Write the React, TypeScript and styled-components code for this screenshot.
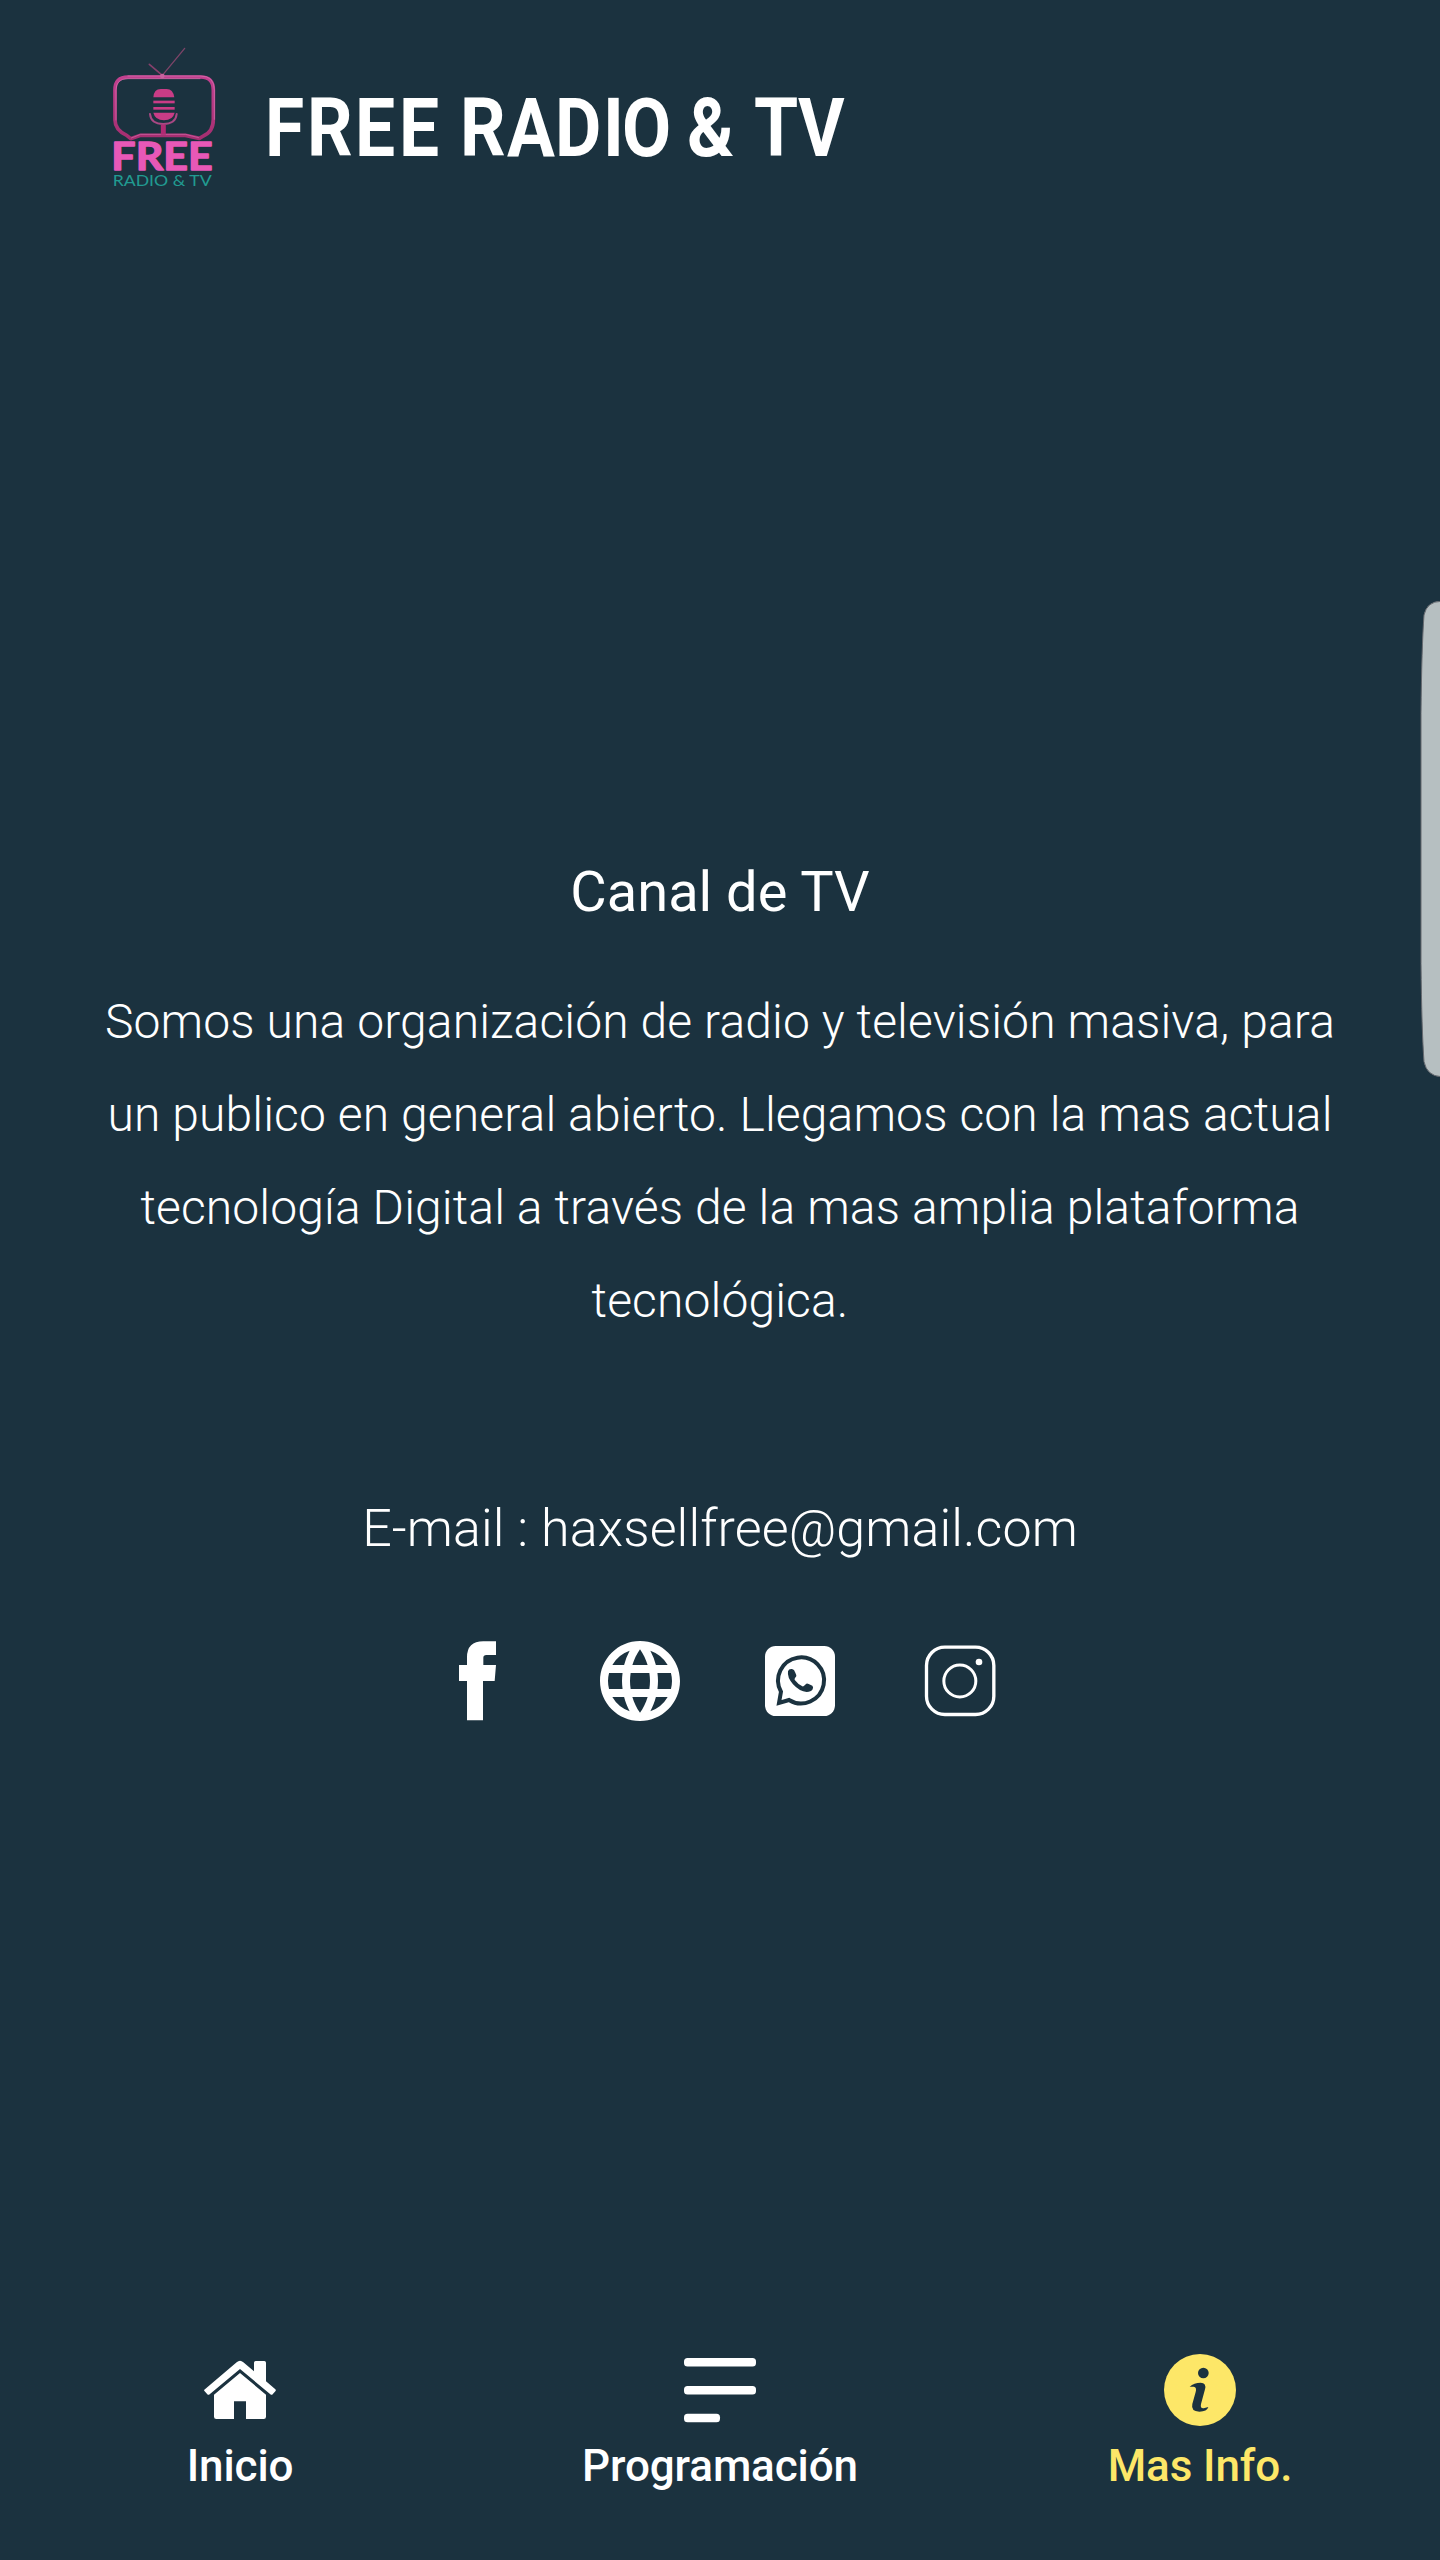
import React from 'react';
import styled, { createGlobalStyle } from 'styled-components';
import { MdLanguage } from 'react-icons/md';

const BG = '#1b323f';
const ACCENT = '#fde768';

const GlobalStyle = createGlobalStyle`
  *, *::before, *::after { box-sizing: border-box; }
  body { margin: 0; background: ${BG}; }
`;

const Screen = styled.div`
  position: relative;
  display: flex;
  flex-direction: column;
  width: 1440px;
  height: 2560px;
  overflow: hidden;
  background: ${BG};
  color: #fff;
  font-family: Roboto, "Liberation Sans", sans-serif;
`;

const Header = styled.header`
  display: flex;
  align-items: center;
  gap: 30px;
  height: 230px;
  padding: 0 100px;
`;

const Logo = styled.svg`
  display: block;
  width: 130px;
  height: 170px;
`;

const Wordmark = styled.svg`
  display: block;
  width: 600px;
  height: 120px;
`;

const Main = styled.main`
  flex: 1;
  display: flex;
  flex-direction: column;
  align-items: center;
  padding: 629px 80px 0;
  text-align: center;
`;

const Heading = styled.h1`
  margin: 0 0 50px;
  font-size: 56px;
  font-weight: 400;
  line-height: 66px;
`;

const About = styled.p`
  width: 1260px;
  margin: 0;
  font-size: 48px;
  font-weight: 300;
  line-height: 93px;
  letter-spacing: 0.12px;
`;

const Contact = styled.p`
  margin: 151px 0 0;
  font-size: 52px;
  font-weight: 300;
  line-height: 62px;
  letter-spacing: 0.1px;
`;

const SocialRow = styled.div`
  display: flex;
  gap: 80px;
  margin-top: 81px;
`;

const SocialLink = styled.a`
  display: block;
  width: 80px;
  height: 80px;
  color: #fff;

  svg {
    display: block;
    width: 100%;
    height: 100%;
  }
`;

const Nav = styled.nav`
  display: grid;
  grid-template-columns: repeat(3, 1fr);
  padding-bottom: 68px;
`;

const NavItem = styled.a<{ $active?: boolean }>`
  display: flex;
  flex-direction: column;
  align-items: center;
  gap: 14px;
  color: ${({ $active }) => ($active ? ACCENT : '#fff')};

  svg {
    display: block;
    width: 72px;
    height: 72px;
  }
`;

const NavLabel = styled.span`
  font-size: 44px;
  font-weight: 500;
  line-height: 52px;
  letter-spacing: -0.1px;
`;

const EdgeHandle = styled.svg`
  position: absolute;
  top: 600px;
  right: 0;
  width: 20px;
  height: 480px;
`;

const LogoMark = () => (
  <Logo viewBox="0 0 390 510">
    <defs>
      <linearGradient id="frame" x1="0" y1="0" x2="0" y2="1">
        <stop offset="0" stopColor="#c2408f" />
        <stop offset="1" stopColor="#a52e70" />
      </linearGradient>
    </defs>
    <g fill="none" strokeLinecap="round" strokeLinejoin="round">
      <path d="M254 55 187 136" stroke="#7d4468" strokeWidth="4" />
      <path d="M148 103 187 136" stroke="#86406c" strokeWidth="5" />
      <path
        d="M84 141H302Q340 141 340 180V268Q340 306 310 318L298 325 256 316H122L92 326 80 316Q45 300 45 270V180Q45 141 84 141Z"
        stroke="url(#frame)"
        strokeWidth="11"
      />
      <path
        d="M84 138H302Q343 138 343 180V268M48 270V180Q48 146 84 146H300"
        stroke="#d977b2"
        strokeWidth="2"
      />
      <path d="M94 324 122 313H256L296 323" stroke="#d66bab" strokeWidth="2" />
      <path d="M150 252Q153 282 190 282T230 252" stroke="#a94884" strokeWidth="6" />
      <path d="M190 284V314" stroke="#b02b73" strokeWidth="15" strokeLinecap="butt" />
    </g>
    <circle cx="187" cy="138" r="7" fill="#c9629f" />
    <g fill="#c93c86">
      <path d="M160 202Q162 177 182 177H200Q219 177 223 202Z" />
      <rect x="160" y="212" width="64" height="8" />
      <rect x="160" y="231" width="64" height="8" />
      <path d="M160 248H224Q219 270 192 271 165 270 160 248Z" />
    </g>
    <text
      x="34"
      y="420"
      textLength="304"
      lengthAdjust="spacingAndGlyphs"
      fill="#e858b7"
      stroke="#e858b7"
      strokeWidth="4"
      strokeLinejoin="round"
      fontFamily="Lato, sans-serif"
      fontWeight="700"
      fontSize="112"
    >
      FREE
    </text>
    <text
      x="38"
      y="468"
      textLength="297"
      lengthAdjust="spacingAndGlyphs"
      fill="#219b91"
      fontFamily="Lato, sans-serif"
      fontWeight="400"
      fontSize="43"
    >
      RADIO &amp; TV
    </text>
  </Logo>
);

const FacebookIcon = () => (
  <svg viewBox="0 63 240 240" fill="currentColor">
    <path d="M81 301V183H57V135H81V112Q81 64 130 64H168V105H139Q130 105 130 113V135H168L164 183H129V301Z" />
  </svg>
);

const WhatsappIcon = () => (
  <svg viewBox="120 63 240 240">
    <rect x="135" y="78" width="210" height="210" rx="32" fill="#fff" />
    <path
      d="M183 215A69 69 0 1 1 207 240L177 249Z"
      fill="none"
      stroke={BG}
      strokeWidth="12"
    />
    <path
      d="M204 154Q206 146 216 147 223 148 226 158L229 166Q230 169 225 174 222 178 225 181 234 193 247 199 251 200 254 196L259 191Q262 190 266 192L277 197Q281 201 278 208 273 216 260 216 239 215 219 193 201 172 204 154Z"
      fill={BG}
    />
  </svg>
);

const InstagramIcon = () => (
  <svg viewBox="600 63 240 240" fill="none" stroke="#fff">
    <rect x="619.5" y="81.5" width="202" height="202" rx="55" strokeWidth="10" />
    <circle cx="719.5" cy="183" r="48" strokeWidth="9" />
    <circle cx="777" cy="126" r="10" fill="#fff" stroke="none" />
  </svg>
);

const HomeIcon = () => (
  <svg viewBox="102 42 216 216" fill="currentColor">
    <path d="M103 149 200 67Q210 58 220 67L252 94V68Q252 63 257 63H283Q288 63 288 68V124L316 148Q319 151 316 154L308 163Q305 166 301 163L210 87 119 163Q115 166 112 163L104 154Q101 151 103 149Z" />
    <path d="M210 99 288 164V230Q288 237 281 237H228V184H192V237H139Q132 237 132 230V164Z" />
  </svg>
);

const ScheduleIcon = () => (
  <svg viewBox="0 0 72 72" fill="currentColor">
    <rect x="0" y="4" width="72" height="8.4" rx="3.5" />
    <rect x="0" y="32" width="72" height="8.4" rx="3.5" />
    <rect x="0" y="59.8" width="36" height="8.4" rx="3.5" />
  </svg>
);

const InfoIcon = () => (
  <svg viewBox="222 72 216 216">
    <circle cx="330" cy="180" r="108" fill="currentColor" />
    <circle cx="340" cy="129" r="16" fill={BG} />
    <path
      d="M299 170Q312 158 332 158 350 159 345 178L333 222Q330 236 341 235L355 231Q351 245 328 245 302 244 307 222L317 186Q321 171 311 170Z"
      fill={BG}
    />
  </svg>
);

const social = [
  { name: 'Facebook', icon: <FacebookIcon /> },
  { name: 'Web', icon: <MdLanguage viewBox="2 2 20 20" /> },
  { name: 'WhatsApp', icon: <WhatsappIcon /> },
  { name: 'Instagram', icon: <InstagramIcon /> },
];

const tabs = [
  { label: 'Inicio', icon: <HomeIcon /> },
  { label: 'Programación', icon: <ScheduleIcon /> },
  { label: 'Mas Info.', icon: <InfoIcon />, active: true },
];

// Left edge of every glyph of the wordmark, spaces included.
const glyphX = [5, 47, 95, 139, 180, 200, 247, 295, 343, 362, 410, 427, 480, 494, 538];
const GLYPH_SCALE = 0.88;

export default function App() {
  return (
    <Screen>
      <GlobalStyle />
      <Header>
        <LogoMark />
        <Wordmark viewBox="0 0 600 120">
          <text
            transform={`scale(${GLYPH_SCALE} 1)`}
            x={glyphX.map((x) => (x / GLYPH_SCALE).toFixed(1)).join(' ')}
            y="101.3"
            fill="#fff"
            fontFamily="Roboto, sans-serif"
            fontWeight="700"
            fontSize="81"
          >
            FREE RADIO &amp; TV
          </text>
        </Wordmark>
      </Header>
      <Main>
        <Heading>Canal de TV</Heading>
        <About>
          Somos una organización de radio y televisión masiva, para un publico en general abierto.
          Llegamos con la mas actual tecnología Digital a través de la mas amplia plataforma
          tecnológica.
        </About>
        <Contact>E-mail : haxsellfree@gmail.com</Contact>
        <SocialRow>
          {social.map(({ name, icon }) => (
            <SocialLink key={name}>{icon}</SocialLink>
          ))}
        </SocialRow>
      </Main>
      <Nav>
        {tabs.map(({ label, icon, active }) => (
          <NavItem key={label} $active={active}>
            {icon}
            <NavLabel>{label}</NavLabel>
          </NavItem>
        ))}
      </Nav>
      <EdgeHandle viewBox="120 60 60 1440" preserveAspectRatio="none">
        <path
          d="M183 64Q141 64 132 105 125 200 123 400V1150Q125 1350 132 1445 141 1488 183 1490Z"
          fill="#b6bfc1"
          stroke="#66696f"
          strokeWidth="3"
        />
      </EdgeHandle>
    </Screen>
  );
}
